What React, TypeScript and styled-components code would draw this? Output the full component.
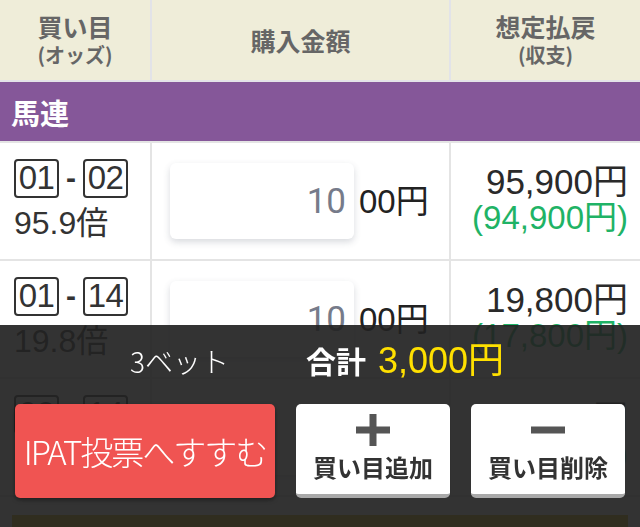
import React from "react";
import styled, { createGlobalStyle } from "styled-components";

const GlobalStyle = createGlobalStyle`
  html, body {
    margin: 0;
    padding: 0;
    background: #fff;
    font-family: "Liberation Sans", "Noto Sans CJK JP", sans-serif;
    color: #222;
  }
  * {
    box-sizing: border-box;
  }
`;

const Page = styled.div`
  width: 640px;
  padding-bottom: 40px;
`;

const HeaderRow = styled.div`
  display: grid;
  grid-template-columns: 152px 299px 1fr;
  height: 82px;
  background: #efedd9;
  border-bottom: 2px solid #e4e3e8;
`;

const HeaderCell = styled.div`
  display: flex;
  flex-direction: column;
  align-items: center;
  justify-content: center;
  color: #666;
  font-weight: bold;
  font-family: "Noto Sans CJK JP", sans-serif;
  border-right: 2px solid #e2e3e8;
  &:last-child {
    border-right: none;
  }
`;

const HeaderMain = styled.span`
  font-size: 25px;
  line-height: 30px;
`;

const HeaderSub = styled.span`
  font-size: 20px;
  line-height: 28px;
`;

const SectionBar = styled.div`
  height: 61px;
  background: #855799;
  color: #fff;
  font-family: "Noto Sans CJK JP", sans-serif;
  font-weight: bold;
  font-size: 29px;
  display: flex;
  align-items: center;
  padding-left: 11px;
  border-bottom: 2px solid #e4e4e4;
`;

const BetRow = styled.div`
  display: grid;
  grid-template-columns: 152px 299px 1fr;
  height: 118px;
  border-bottom: 2px solid #e4e4e4;
`;

const Cell = styled.div<{ $align?: "left" | "right" }>`
  display: flex;
  flex-direction: column;
  justify-content: center;
  align-items: ${(p) => (p.$align === "right" ? "flex-end" : "flex-start")};
  border-right: 2px solid #e4e4e4;
  padding: 0 12px 0 14px;
  &:last-child {
    border-right: none;
  }
`;

const Combo = styled.div`
  display: flex;
  align-items: center;
  gap: 7px;
  margin-top: -4px;
`;

const Horse = styled.span`
  display: inline-flex;
  align-items: center;
  justify-content: center;
  width: 45px;
  height: 39px;
  border: 2px solid #333;
  border-radius: 4px;
  font-size: 33px;
  letter-spacing: -0.5px;
  color: #333;
`;

const Dash = styled.span`
  font-size: 30px;
  font-weight: bold;
  color: #333;
`;

const Odds = styled.div`
  font-size: 32px;
  line-height: 34px;
  color: #333;
  margin-top: 8px;
`;

const AmountCell = styled.div`
  display: flex;
  align-items: center;
  padding-left: 18px;
  border-right: 2px solid #e4e4e4;
`;

const AmountInput = styled.div`
  width: 184px;
  height: 76px;
  background: #fff;
  border-radius: 6px;
  box-shadow: 0 3px 7px rgba(60, 70, 90, 0.2);
  display: flex;
  align-items: center;
  justify-content: flex-end;
  padding-right: 8px;
  font-family: Roboto, "Liberation Sans", sans-serif;
  font-size: 35px;
  color: #767b8a;
`;

const AmountUnit = styled.span`
  font-size: 33px;
  color: #222;
  margin-left: 5px;
  margin-top: -4px;
`;

const Payout = styled.div`
  font-size: 35px;
  color: #2a2a2a;
  line-height: 36px;
  margin-top: -2px;
`;

const Profit = styled.div`
  font-size: 33px;
  color: #1fb366;
  line-height: 36px;
`;

const GoldBar = styled.div`
  margin: 18px 12px 0;
  height: 60px;
  background: #d9ad00;
`;

const BottomPanel = styled.div`
  position: fixed;
  left: 0;
  right: 0;
  bottom: 0;
  height: 202px;
  background: rgba(34, 34, 34, 0.92);
  padding: 0 15px;
`;

const Summary = styled.div`
  display: flex;
  align-items: baseline;
  gap: 77px;
  height: 79px;
  padding-top: 6px;
  padding-left: 115px;
  font-family: "Noto Sans CJK JP", sans-serif;
  color: #fff;
`;

const BetCount = styled.span`
  font-size: 28px;
  font-weight: 300;
`;

const Total = styled.span`
  font-size: 30px;
  font-weight: bold;
`;

const TotalValue = styled.span`
  font-family: "Liberation Sans", "Noto Sans CJK JP", sans-serif;
  font-size: 36px;
  font-weight: normal;
  color: #ffe000;
  margin-left: 12px;
`;

const ButtonRow = styled.div`
  display: grid;
  grid-template-columns: 260px 1fr 1fr;
  gap: 21px;
  height: 94px;
`;

const GoButton = styled.button`
  border: none;
  border-radius: 5px;
  background: #f05452;
  color: #fff;
  font-family: "Noto Sans CJK JP", sans-serif;
  font-weight: 300;
  font-size: 33px;
  letter-spacing: -2px;
  padding: 0;
  box-shadow: 0 2px 4px rgba(0, 0, 0, 0.4);
  white-space: nowrap;
  cursor: pointer;
`;

const ToolButton = styled.button`
  border: none;
  border-radius: 5px;
  background: #fff;
  border-bottom: 4px solid #a9a9a9;
  display: flex;
  flex-direction: column;
  align-items: center;
  justify-content: center;
  gap: 6px;
  padding: 0 0 2px;
  font-family: "Noto Sans CJK JP", sans-serif;
  font-weight: bold;
  font-size: 24px;
  line-height: 30px;
  color: #333;
  cursor: pointer;
`;

const PlusIcon = () => (
  <svg width="34" height="32" viewBox="0 0 34 32">
    <rect x="13.5" y="0" width="7" height="32" fill="#555" />
    <rect x="0" y="12.5" width="34" height="7" fill="#555" />
  </svg>
);

const MinusIcon = () => (
  <svg width="34" height="32" viewBox="0 0 34 32">
    <rect x="0" y="12.5" width="34" height="7" fill="#555" />
  </svg>
);

const bets = [
  { a: "01", b: "02", odds: "95.9倍", payout: "95,900円", profit: "(94,900円)" },
  { a: "01", b: "14", odds: "19.8倍", payout: "19,800円", profit: "(17,800円)" },
  { a: "02", b: "14", odds: "21.4倍", payout: "21,400円", profit: "(20,400円)" },
];

const App = () => {
  return (
    <>
      <GlobalStyle />
      <Page>
        <HeaderRow>
          <HeaderCell>
            <HeaderMain>買い目</HeaderMain>
            <HeaderSub>(オッズ)</HeaderSub>
          </HeaderCell>
          <HeaderCell>
            <HeaderMain>購入金額</HeaderMain>
          </HeaderCell>
          <HeaderCell>
            <HeaderMain>想定払戻</HeaderMain>
            <HeaderSub>(収支)</HeaderSub>
          </HeaderCell>
        </HeaderRow>
        <SectionBar>馬連</SectionBar>
        {bets.map((bet) => (
          <BetRow key={bet.a + bet.b}>
            <Cell>
              <Combo>
                <Horse>{bet.a}</Horse>
                <Dash>-</Dash>
                <Horse>{bet.b}</Horse>
              </Combo>
              <Odds>{bet.odds}</Odds>
            </Cell>
            <AmountCell>
              <AmountInput>10</AmountInput>
              <AmountUnit>00円</AmountUnit>
            </AmountCell>
            <Cell $align="right">
              <Payout>{bet.payout}</Payout>
              <Profit>{bet.profit}</Profit>
            </Cell>
          </BetRow>
        ))}
        <GoldBar />
      </Page>
      <BottomPanel>
        <Summary>
          <BetCount>3ベット</BetCount>
          <Total>
            合計<TotalValue>3,000円</TotalValue>
          </Total>
        </Summary>
        <ButtonRow>
          <GoButton>IPAT投票へすすむ</GoButton>
          <ToolButton>
            <PlusIcon />
            買い目追加
          </ToolButton>
          <ToolButton>
            <MinusIcon />
            買い目削除
          </ToolButton>
        </ButtonRow>
      </BottomPanel>
    </>
  );
};

export default App;
